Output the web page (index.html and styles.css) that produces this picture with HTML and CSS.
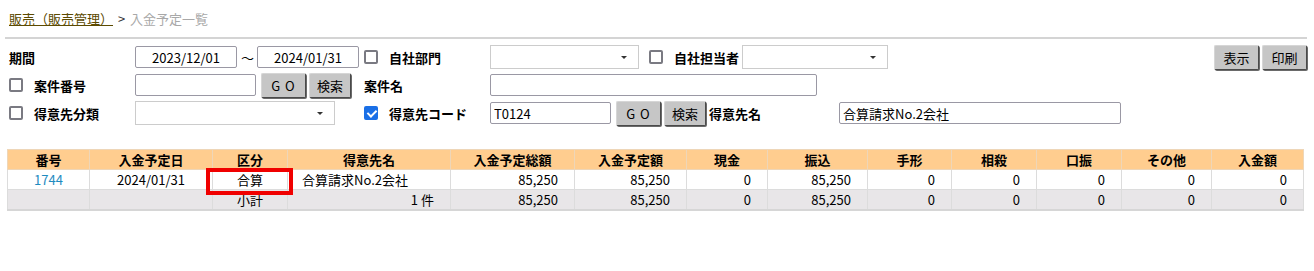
FILE: index.html
```html
<!DOCTYPE html>
<html lang="ja">
<head>
  <meta charset="UTF-8" />
  <title>入金予定一覧</title>
  <link rel="stylesheet" href="styles.css">
</head>
<body>
  <div class="crumb">
    <a href="#" class="crumb-link">販売（販売管理）</a>
    <span class="crumb-sep">&gt;</span>
    <span class="crumb-here">入金予定一覧</span>
  </div>
  <div class="rule"></div>

  <div class="search">
    <div class="cell"><span class="lbl">期間</span></div>
    <div class="cell">
      <input class="txt date" value="2023/12/01" />
      <span class="tilde">～</span>
      <input class="txt date" value="2024/01/31" />
    </div>
    <div class="cell"><input type="checkbox" class="chk" /><span class="lbl">自社部門</span></div>
    <div class="cell wide">
      <span class="sel w149"></span>
      <input type="checkbox" class="chk chk-mid" /><span class="lbl">自社担当者</span>
      <span class="sel w146 ml3"></span>
      <div class="actions">
        <button class="btn">表示</button>
        <button class="btn">印刷</button>
      </div>
    </div>

    <div class="cell"><input type="checkbox" class="chk" /><span class="lbl">案件番号</span></div>
    <div class="cell">
      <input class="txt w121" />
      <button class="btn go">G O</button>
      <button class="btn">検索</button>
    </div>
    <div class="cell"><span class="lbl">案件名</span></div>
    <div class="cell wide"><input class="txt w327" /></div>

    <div class="cell"><input type="checkbox" class="chk" /><span class="lbl">得意先分類</span></div>
    <div class="cell"><span class="sel w200"></span></div>
    <div class="cell"><input type="checkbox" class="chk" checked /><span class="lbl">得意先コード</span></div>
    <div class="cell wide">
      <input class="txt w121" value="T0124" />
      <button class="btn go">G O</button>
      <button class="btn">検索</button>
      <span class="lbl name-lbl">得意先名</span>
      <input class="txt w282" value="合算請求No.2会社" />
    </div>
  </div>

  <table class="list">
    <colgroup>
      <col style="width:82px"><col style="width:123px"><col style="width:75px"><col style="width:163px">
      <col style="width:124px"><col style="width:112px"><col style="width:81px"><col style="width:100px">
      <col style="width:84px"><col style="width:85px"><col style="width:85px"><col style="width:90px">
      <col style="width:92px">
    </colgroup>
    <thead>
      <tr>
        <th>番号</th><th>入金予定日</th><th>区分</th><th>得意先名</th>
        <th>入金予定総額</th><th>入金予定額</th><th>現金</th><th>振込</th>
        <th>手形</th><th>相殺</th><th>口振</th><th>その他</th><th>入金額</th>
      </tr>
    </thead>
    <tbody>
      <tr>
        <td class="c"><a href="#" class="no">1744</a></td>
        <td class="c">2024/01/31</td>
        <td class="c mark">合算<span class="hilite"></span></td>
        <td class="l">合算請求No.2会社</td>
        <td class="r">85,250</td><td class="r">85,250</td><td class="r">0</td><td class="r">85,250</td>
        <td class="r">0</td><td class="r">0</td><td class="r">0</td><td class="r">0</td><td class="r">0</td>
      </tr>
      <tr class="sub">
        <td></td>
        <td></td>
        <td class="c">小計</td>
        <td class="r">1 件</td>
        <td class="r">85,250</td><td class="r">85,250</td><td class="r">0</td><td class="r">85,250</td>
        <td class="r">0</td><td class="r">0</td><td class="r">0</td><td class="r">0</td><td class="r">0</td>
      </tr>
    </tbody>
  </table>
</body>
</html>
```

FILE: styles.css
```css
body {
  margin: 0;
  font-family: "Noto Sans CJK JP", "Noto Sans", sans-serif;
  font-size: 13px;
  color: #000;
  background: #fff;
}
.crumb {
  padding: 10px 0 0 9px;
  height: 27px;
  box-sizing: border-box;
  line-height: 17px;
}
.crumb-link {
  color: #5c4a00;
  text-decoration: underline;
}
.crumb-sep {
  color: #333;
  margin: 0 2px;
}
.crumb-here {
  color: #a8a8a8;
}
.rule {
  height: 2px;
  margin: 10px 7px 0 5px;
  background: #d4d4d4;
}
.search {
  display: grid;
  grid-template-columns: 126px 229px 126px 1fr;
  grid-auto-rows: 26px;
  row-gap: 2px;
  padding: 5px 7px 0 9px;
}
.cell {
  display: flex;
  align-items: center;
  white-space: nowrap;
}
.lbl {
  font-weight: bold;
}
.chk {
  appearance: none;
  position: relative;
  width: 14px;
  height: 14px;
  margin: 0 11px 0 0;
  box-sizing: border-box;
  border: 2px solid #7a7a82;
  border-radius: 2px;
  background: #fff;
}
.chk:checked {
  background: #1a6fe6;
  border-color: #1a6fe6;
}
.chk:checked::after {
  content: "";
  position: absolute;
  left: 3px;
  top: 0;
  width: 4px;
  height: 7px;
  border: solid #fff;
  border-width: 0 2px 2px 0;
  transform: rotate(45deg);
}
.chk-mid {
  margin-left: 10px;
}
.txt {
  height: 22px;
  box-sizing: border-box;
  border: 1px solid #9a98a4;
  border-radius: 2px;
  font: inherit;
  padding: 0 3px;
  margin: 0;
}
.date {
  width: 102px;
  text-align: center;
}
.tilde {
  margin: 0 3px 0 4px;
}
.w121 { width: 121px; }
.w327 { width: 327px; }
.w282 { width: 282px; }
.name-lbl {
  margin: 0 78px 0 3px;
}
.sel {
  position: relative;
  display: inline-block;
  height: 24px;
  box-sizing: border-box;
  border: 1px solid #cccccc;
  background: #fff;
}
.sel::after {
  content: "";
  position: absolute;
  right: 11px;
  top: 10px;
  border-left: 3px solid transparent;
  border-right: 3px solid transparent;
  border-top: 3px solid #333;
}
.w149 { width: 149px; }
.w146 { width: 146px; }
.w200 { width: 200px; }
.ml3 { margin-left: 3px; }
.btn {
  height: 25px;
  padding: 0 7px;
  margin: 0 0 0 3px;
  font: inherit;
  color: #000;
  background: #c6c6c6;
  border: 1px solid #d6d6d6;
  border-right-color: #4a4a4a;
  border-bottom-color: #4a4a4a;
  border-radius: 2px;
  box-shadow: 1px 1px 0 #6a6a6a;
}
.go {
  width: 45px;
  margin-left: 5px;
  letter-spacing: 1px;
}
.actions {
  margin-left: auto;
  display: flex;
}
.actions .btn {
  width: 45px;
  padding: 0;
  margin-left: 3px;
}
.list {
  margin: 23px 0 0 7px;
  border-collapse: collapse;
  table-layout: fixed;
  width: 1297px;
  border-bottom: 2px solid #d6d6d6;
}
.list th,
.list td {
  border: 1px solid #dcdcdc;
  height: 19px;
  padding: 0;
  line-height: 17px;
  white-space: nowrap;
}
.list th {
  background: #ffcd8f;
  font-weight: bold;
  text-align: center;
  border-color: #eed6b8;
}
.list td.c { text-align: center; }
.list td.l { text-align: left; padding-left: 14px; }
.list td.r { text-align: right; padding-right: 16px; }
.sub td {
  background: #e8e6e8;
}
.no {
  color: #1e8bbf;
  text-decoration: none;
}
.mark {
  position: relative;
}
.hilite {
  position: absolute;
  left: -7px;
  top: -2px;
  width: 87px;
  height: 27px;
  box-sizing: border-box;
  border: 4px solid #f00000;
}
```
